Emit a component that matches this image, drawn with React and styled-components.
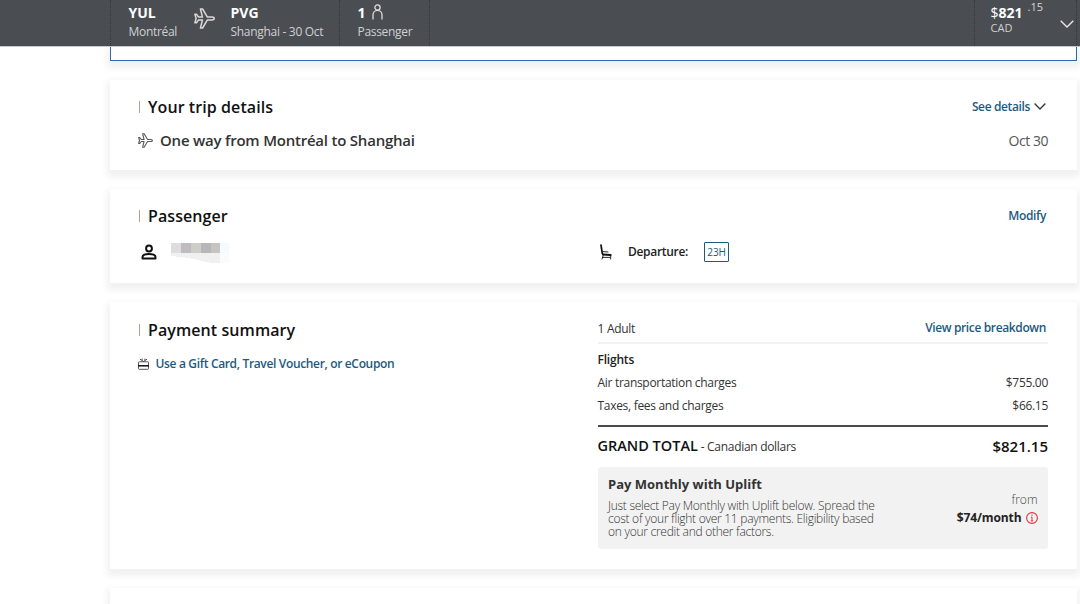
import React from "react";
import styled, { createGlobalStyle } from "styled-components";

export default function App() {
  return (
    <>
      <GlobalStyle />
      <Page>
        <TripBar>
          <Route>
            <Stop $width={65}>
              <Code>YUL</Code>
              <Caption>Montréal</Caption>
            </Stop>
            <PlaneIcon size={21} color="#d8d9da" />
            <Stop $gap={16}>
              <Code>PVG</Code>
              <Caption>Shanghai - 30 Oct</Caption>
            </Stop>
          </Route>
          <Travellers>
            <Code>
              1
              <PersonOutline />
            </Code>
            <Caption>Passenger</Caption>
          </Travellers>
          <Total>
            <div>
              <Price>
                <Dollar>$</Dollar>821<Cents>.15</Cents>
              </Price>
              <Caption $small>CAD</Caption>
            </div>
            <BarChevron width="14" height="8" viewBox="0 0 14 8" fill="none" stroke="#e6e6e6" strokeWidth="1.4">
              <path d="M0.7 0.8 7 7 13.3 0.8" />
            </BarChevron>
          </Total>
        </TripBar>

        <SelectedCard />

        <Card $height={90}>
          <TitleRow>
            <Title>Your trip details</Title>
            <Link>
              See details
              <svg width="12" height="8" viewBox="0 0 12 8" fill="none" stroke="#333" strokeWidth="1.3">
                <path d="M0.6 0.5 6 6 11.4 0.5" />
              </svg>
            </Link>
          </TitleRow>
          <TripRow>
            <PlaneIcon size={15} color="#555" />
            <TripName>One way from Montréal to Shanghai</TripName>
            <TripDate>Oct 30</TripDate>
          </TripRow>
        </Card>

        <Card $height={94}>
          <TitleRow>
            <Title>Passenger</Title>
            <Link>Modify</Link>
          </TitleRow>
          <PassengerRow>
            <PassengerName>
              <PersonSolid />
              <HiddenName />
            </PassengerName>
            <SeatInfo>
              <SeatIcon />
              <SeatLabel>Departure:</SeatLabel>
              <Seat>23H</Seat>
            </SeatInfo>
          </PassengerRow>
        </Card>

        <Card $height={267} $top={17}>
          <Summary>
            <div>
              <Title>Payment summary</Title>
              <GiftLink>
                <GiftIcon />
                Use a Gift Card, Travel Voucher, or eCoupon
              </GiftLink>
            </div>
            <Charges>
              <AdultRow>
                1 Adult
                <Link>View price breakdown</Link>
              </AdultRow>
              <FlightsHeading>Flights</FlightsHeading>
              <ChargeRow>
                <span>Air transportation charges</span>
                <span>$755.00</span>
              </ChargeRow>
              <ChargeRow>
                <span>Taxes, fees and charges</span>
                <span>$66.15</span>
              </ChargeRow>
              <GrandTotal>
                <span>
                  <GrandLabel>GRAND TOTAL</GrandLabel> - Canadian dollars
                </span>
                <GrandPrice>$821.15</GrandPrice>
              </GrandTotal>
              <Uplift>
                <div>
                  <UpliftTitle>Pay Monthly with Uplift</UpliftTitle>
                  <UpliftText>
                    Just select Pay Monthly with Uplift below. Spread the
                    <br />
                    cost of your flight over 11 payments. Eligibility based
                    <br />
                    on your credit and other factors.
                  </UpliftText>
                </div>
                <Monthly>
                  <From>from</From>
                  <Rate>
                    $74/month
                    <InfoIcon />
                  </Rate>
                </Monthly>
              </Uplift>
            </Charges>
          </Summary>
        </Card>

        <Card $height={60} />
      </Page>
    </>
  );
}

// Icons
function PlaneIcon({ size, color }) {
  return (
    <svg width={size} height={size} viewBox="0 0 21 21" fill="none" stroke={color} strokeWidth="1.5" strokeLinejoin="round">
      <path d="M20.2 10.5c0-.9-1-1.4-2.200-1.400h-4.600L8.600 1H6.400l2.100 8.100H4.600L2.500 6.300H.900l1.200 4.200L.900 14.700h1.600l2.100-2.800h3.900L6.400 20h2.200l4.800-8.100H18c1.200 0 2.200-.5 2.200-1.400z" />
    </svg>
  );
}

function PersonOutline() {
  return (
    <svg width="11" height="17" viewBox="0 0 11 17" fill="none" stroke="#dedede" strokeWidth="1.3">
      <circle cx="5.500" cy="3.500" r="2.600" />
      <path d="M1 15.500v-4.700a4.500 4.500 0 0 1 9 0v4.700" />
    </svg>
  );
}

function PersonSolid() {
  return (
    <svg width="16" height="16" viewBox="0 0 16 16" fill="none" stroke="#111" strokeWidth="2">
      <circle cx="8" cy="4.500" r="2.900" />
      <path d="M1.500 14.500v-1.300C1.500 11.200 4.500 10 8 10s6.500 1.200 6.500 3.200v1.300z" strokeLinejoin="round" />
    </svg>
  );
}

function SeatIcon() {
  return (
    <svg width="12" height="16" viewBox="0 0 12 16" fill="none" stroke="#111" strokeLinecap="round">
      <path d="M1 1 2.300 9.500" strokeWidth="1.700" />
      <path d="M3 10.500 10.500 11" strokeWidth="2.200" />
      <path d="M3 7.600 8 8M10.700 11v4M3.200 11.500 2 15M3 13.400h7" strokeWidth="0.900" />
    </svg>
  );
}

function GiftIcon() {
  return (
    <svg width="11" height="12" viewBox="0 0 11 12" fill="none" stroke="#444">
      <rect x="0.500" y="3.800" width="10" height="7.500" rx="0.800" strokeWidth="0.900" />
      <path d="M0 7.800h11" stroke="#111" strokeWidth="1.500" />
      <path d="M5.500 3.500 2 1.200M5.500 3.500 9 1.200M3.500 1.200h1.300M6.200 1.200h1.300" strokeWidth="1" />
    </svg>
  );
}

function InfoIcon() {
  return (
    <svg width="12" height="12" viewBox="0 0 12 12" fill="none" stroke="#d9363e">
      <circle cx="6" cy="6" r="5.400" strokeWidth="1.100" />
      <path d="M6 2.600v1.300M4.900 5.200H6v3.600M4.700 8.900h2.600" strokeWidth="1" />
    </svg>
  );
}

// Mosaic over the passenger's name
function HiddenName() {
  return (
    <Mosaic width="60" height="20" viewBox="0 0 60 20" shapeRendering="crispEdges">
      <path fill="#dedcde" d="M0 0h10v10H0z" />
      <path fill="#bfbcbf" d="M10 0h10v10H10z" />
      <path fill="#cdcdca" d="M20 0h10v10H20z" />
      <path fill="#b8b6b8" d="M30 0h10v10H30z" />
      <path fill="#c5c4c2" d="M40 0h9v10h-9z" />
      <path fill="#f5faff" d="M49 0h9v10h-9z" />
      <path fill="#f0f0f0" d="M0 10h49v10h-9L18 15 0 13z" />
      <path fill="#fafbfd" d="M49 10h9v10h-9z" />
    </Mosaic>
  );
}

const GlobalStyle = createGlobalStyle`
  * {
    box-sizing: border-box;
  }

  body {
    margin: 0;
    background: #fff;
    color: #333;
    font-family: "Open Sans", "Noto Sans", sans-serif;
    font-size: 12px;
    overflow: hidden;
  }

  svg {
    display: block;
    flex-shrink: 0;
  }
`;

const Page = styled.div`
  width: 1080px;
  height: 604px;
  overflow: hidden;
`;

const TripBar = styled.header`
  height: 46px;
  padding: 0 3px 0 110px;
  display: flex;
  background: #4a4d52;
  position: relative;
  box-shadow: 0 1px 0 #c9cacb;
`;

const Route = styled.div`
  width: 228.5px;
  padding: 4px 0 0 17.5px;
  display: flex;
  border-left: 1px dotted #33363a;

  > svg {
    margin-top: 4px;
  }
`;

const Stop = styled.div`
  width: ${({ $width }) => ($width ? `${$width}px` : "auto")};
  margin-left: ${({ $gap }) => $gap || 0}px;
`;

const Code = styled.div`
  display: flex;
  gap: 6px;
  height: 18px;
  line-height: 18px;
  font-size: 14px;
  font-weight: 700;
  color: #fff;
`;

const Caption = styled.div`
  font-size: ${({ $small }) => ($small ? 11 : 12)}px;
  line-height: ${({ $small }) => ($small ? 11 : 19)}px;
  letter-spacing: ${({ $small }) => ($small ? 0.1 : -0.3)}px;
  color: #d0d1d2;
`;

const Travellers = styled.div`
  width: 90px;
  padding: 4px 0 0 18px;
  border-left: 1px dotted #33363a;
`;

const Total = styled.div`
  flex: 1;
  display: flex;
  justify-content: flex-end;
  border-left: 1px dotted #33363a;
  border-right: 1px dotted #33363a;

  > div {
    width: 102.5px;
    padding: 4px 0 0 16px;
    border-left: 1px dotted #33363a;
  }
`;

const Price = styled.div`
  display: flex;
  height: 18px;
  line-height: 18px;
  font-size: 14px;
  font-weight: 700;
  color: #fff;
`;

const Dollar = styled.span`
  font-weight: 400;
`;

const Cents = styled.span`
  margin: -6px 0 0 5px;
  font-size: 11px;
  font-weight: 400;
  color: #d8d9da;
`;

const BarChevron = styled.svg`
  margin: 20px 2px 0 -16px;
`;

// White panels
const Card = styled.section`
  width: 967px;
  height: ${({ $height }) => $height}px;
  margin: 0 0 19px 110px;
  padding: ${({ $top }) => $top || 16}px 29px 0 28px;
  background: #fff;
  box-shadow: 0 4px 7px 3px rgba(0, 0, 0, 0.06);
`;

const SelectedCard = styled(Card)`
  height: 15px;
  margin-bottom: 19px;
  border: 1px solid #2a6ab0;
  border-top: 0;
  padding: 0;
`;

const TitleRow = styled.div`
  display: flex;
  justify-content: space-between;
  align-items: center;
`;

const Title = styled.h2`
  margin: 0;
  display: flex;
  align-items: center;
  height: 22px;
  font-size: 16px;
  font-weight: 600;
  letter-spacing: 0.08px;
  color: #111;

  &::before {
    content: "";
    width: 1px;
    height: 12px;
    margin: 0 8px 0 1px;
    background: #b5a38f;
  }
`;

const Link = styled.a`
  margin-right: 2px;
  display: flex;
  align-items: center;
  gap: 4px;
  line-height: 18px;
  font-weight: 600;
  letter-spacing: -0.37px;
  color: #1c5a80;
`;

const TripRow = styled.div`
  margin-top: 11px;
  height: 22px;
  display: flex;
  align-items: center;
`;

const TripName = styled.span`
  margin-left: 7px;
  font-size: 15px;
  font-weight: 600;
  letter-spacing: -0.22px;
`;

const TripDate = styled.span`
  margin-left: auto;
  font-size: 14px;
  letter-spacing: -0.45px;
  color: #555;
`;

const PassengerRow = styled.div`
  margin-top: 13px;
  height: 22px;
  display: grid;
  grid-template-columns: 462px 1fr;
  align-items: center;
`;

const PassengerName = styled.div`
  padding-left: 3px;
  display: flex;
  align-items: center;
  gap: 14px;
`;

const Mosaic = styled.svg`
  margin-top: 3px;
`;

const SeatInfo = styled.div`
  display: flex;
  align-items: center;
`;

const SeatLabel = styled.span`
  margin: 0 16px;
  font-weight: 600;
  letter-spacing: -0.3px;
  color: #222;
`;

const Seat = styled.span`
  width: 25px;
  height: 20px;
  line-height: 18px;
  border: 1px solid #1c5a80;
  border-radius: 1px;
  font-size: 10px;
  text-align: center;
  color: #1c5a80;
`;

const Summary = styled.div`
  display: grid;
  grid-template-columns: 1fr 450.5px;
`;

const GiftLink = styled.a`
  margin-top: 12px;
  display: flex;
  align-items: center;
  gap: 6.5px;
  line-height: 22px;
  font-weight: 600;
  letter-spacing: -0.34px;
  color: #1c5a80;
`;

const Charges = styled.div`
  letter-spacing: -0.3px;
`;

const AdultRow = styled.div`
  height: 25px;
  padding-bottom: 5px;
  display: flex;
  justify-content: space-between;
  align-items: center;
  border-bottom: 2px solid #f2f2f2;
`;

const FlightsHeading = styled.div`
  margin-top: 4px;
  line-height: 23px;
  font-weight: 600;
  letter-spacing: -0.2px;
  color: #222;
`;

const ChargeRow = styled.div`
  display: flex;
  justify-content: space-between;
  line-height: 23px;
`;

const GrandTotal = styled.div`
  margin-top: 8px;
  height: 40px;
  display: flex;
  justify-content: space-between;
  line-height: 38px;
  border-top: 2px solid #4a4a52;
`;

const GrandLabel = styled.span`
  font-size: 14.5px;
  font-weight: 600;
  letter-spacing: 0;
  color: #111;
`;

const GrandPrice = styled.span`
  font-size: 15px;
  font-weight: 600;
  letter-spacing: 0;
  color: #111;
`;

const Uplift = styled.div`
  height: 82px;
  margin-top: 2px;
  padding: 8px 10.5px 0;
  display: flex;
  justify-content: space-between;
  background: #f2f2f2;
  border-radius: 3px;
`;

const UpliftTitle = styled.div`
  line-height: 19px;
  font-size: 13px;
  font-weight: 700;
  letter-spacing: 0;
`;

const UpliftText = styled.p`
  margin: 5px 0 0;
  line-height: 13px;
  font-weight: 300;
  letter-spacing: -0.27px;
  color: #333;
`;

const Monthly = styled.div`
  padding-top: 16px;
  text-align: right;
  line-height: 18px;
  letter-spacing: -0.1px;
`;

const From = styled.div`
  font-weight: 300;
  letter-spacing: 0;
  color: #444;
`;

const Rate = styled.div`
  display: flex;
  align-items: center;
  gap: 4px;
  font-weight: 700;
  color: #222;
`;
